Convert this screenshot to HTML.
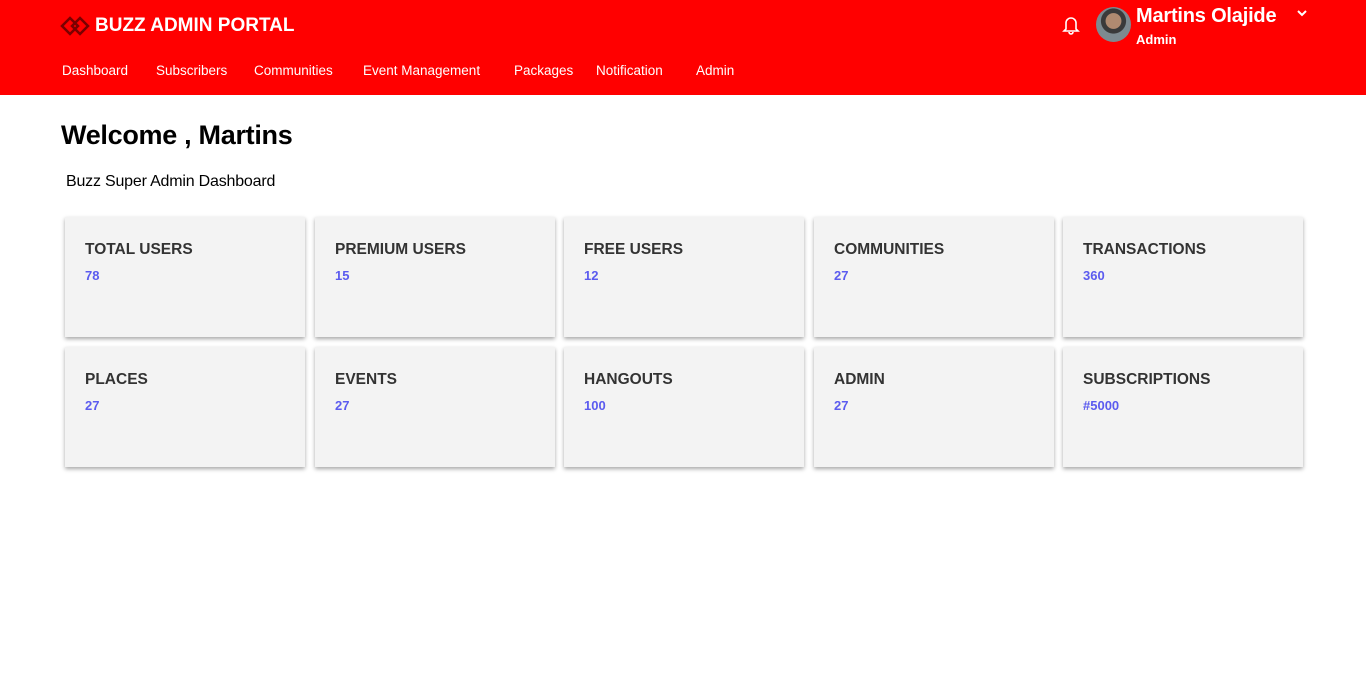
<!DOCTYPE html>
<html><head><meta charset="utf-8"><style>
body{margin:0;font-family:"Liberation Sans",sans-serif;background:#fff;width:1366px;height:673px;overflow:hidden;position:relative}
.hdr{position:absolute;left:0;top:0;width:1366px;height:95px;background:#ff0000;color:#fff}
.logo{position:absolute;left:60px;top:15px;font-weight:bold;font-size:19px;display:flex;align-items:center}
.logo svg{margin-right:5px}
.nav span{position:absolute;top:63px;font-size:13.5px;white-space:nowrap}
.bell{position:absolute;left:1062px;top:15px}
.av{position:absolute;left:1096px;top:7px;width:35px;height:35px;border-radius:50%;background:radial-gradient(circle at 50% 40%,#b08a70 0 28%,#3a3a3a 30% 45%,#7d8a90 47%)}
.name{position:absolute;left:1136px;top:5px;font-size:20px;font-weight:bold;letter-spacing:-0.2px}
.role{position:absolute;left:1136px;top:32px;font-size:13px;font-weight:bold}
.chev{position:absolute;left:1297px;top:9px}
h1{position:absolute;left:61px;top:120px;margin:0;font-size:27px;font-weight:bold;letter-spacing:-0.3px}
.sub{position:absolute;left:66px;top:173px;font-size:16px;letter-spacing:-0.2px}
.card{position:absolute;width:240px;height:120px;background:#f3f3f3;box-shadow:0 2px 4px rgba(0,0,0,.35)}
.card .t{position:absolute;left:20px;top:24px;font-size:15.5px;font-weight:bold;color:#333}
.card .v{position:absolute;left:20px;top:51px;font-size:13px;font-weight:bold;color:#5b5bef}
</style></head><body>
<div class="hdr">
<div class="logo"><svg width="30" height="22" viewBox="0 0 30 22"><g fill="none" stroke="#7a0000" stroke-width="2.5"><path d="M2 11 L10 3 L18 11 L10 19 Z"/><path d="M12 11 L20 3 L28 11 L20 19 Z"/></g></svg>BUZZ ADMIN PORTAL</div>
<div class="nav"><span style="left:62px">Dashboard</span><span style="left:156px">Subscribers</span><span style="left:254px">Communities</span><span style="left:363px">Event Management</span><span style="left:514px">Packages</span><span style="left:596px">Notification</span><span style="left:696px">Admin</span></div>
<svg class="bell" width="18" height="20" viewBox="0 0 18 20"><path d="M4 14 V8 a5 5 0 0 1 10 0 V14 L16 16 H2 Z M7 17 a2 2 0 0 0 4 0" fill="none" stroke="#fff" stroke-width="1.6"/></svg>
<div class="av"></div>
<div class="name">Martins Olajide</div>
<svg class="chev" width="10" height="8" viewBox="0 0 10 8"><path d="M1 2 L5 6 L9 2" fill="none" stroke="#fff" stroke-width="2"/></svg>
<div class="role">Admin</div>
</div>
<h1>Welcome , Martins</h1>
<div class="sub">Buzz Super Admin Dashboard</div>
<div class="card" style="left:65px;top:217px"><div class="t">TOTAL USERS</div><div class="v">78</div></div>
<div class="card" style="left:315px;top:217px"><div class="t">PREMIUM USERS</div><div class="v">15</div></div>
<div class="card" style="left:564px;top:217px"><div class="t">FREE USERS</div><div class="v">12</div></div>
<div class="card" style="left:814px;top:217px"><div class="t">COMMUNITIES</div><div class="v">27</div></div>
<div class="card" style="left:1063px;top:217px"><div class="t">TRANSACTIONS</div><div class="v">360</div></div>
<div class="card" style="left:65px;top:347px"><div class="t">PLACES</div><div class="v">27</div></div>
<div class="card" style="left:315px;top:347px"><div class="t">EVENTS</div><div class="v">27</div></div>
<div class="card" style="left:564px;top:347px"><div class="t">HANGOUTS</div><div class="v">100</div></div>
<div class="card" style="left:814px;top:347px"><div class="t">ADMIN</div><div class="v">27</div></div>
<div class="card" style="left:1063px;top:347px"><div class="t">SUBSCRIPTIONS</div><div class="v">#5000</div></div>
</body></html>
